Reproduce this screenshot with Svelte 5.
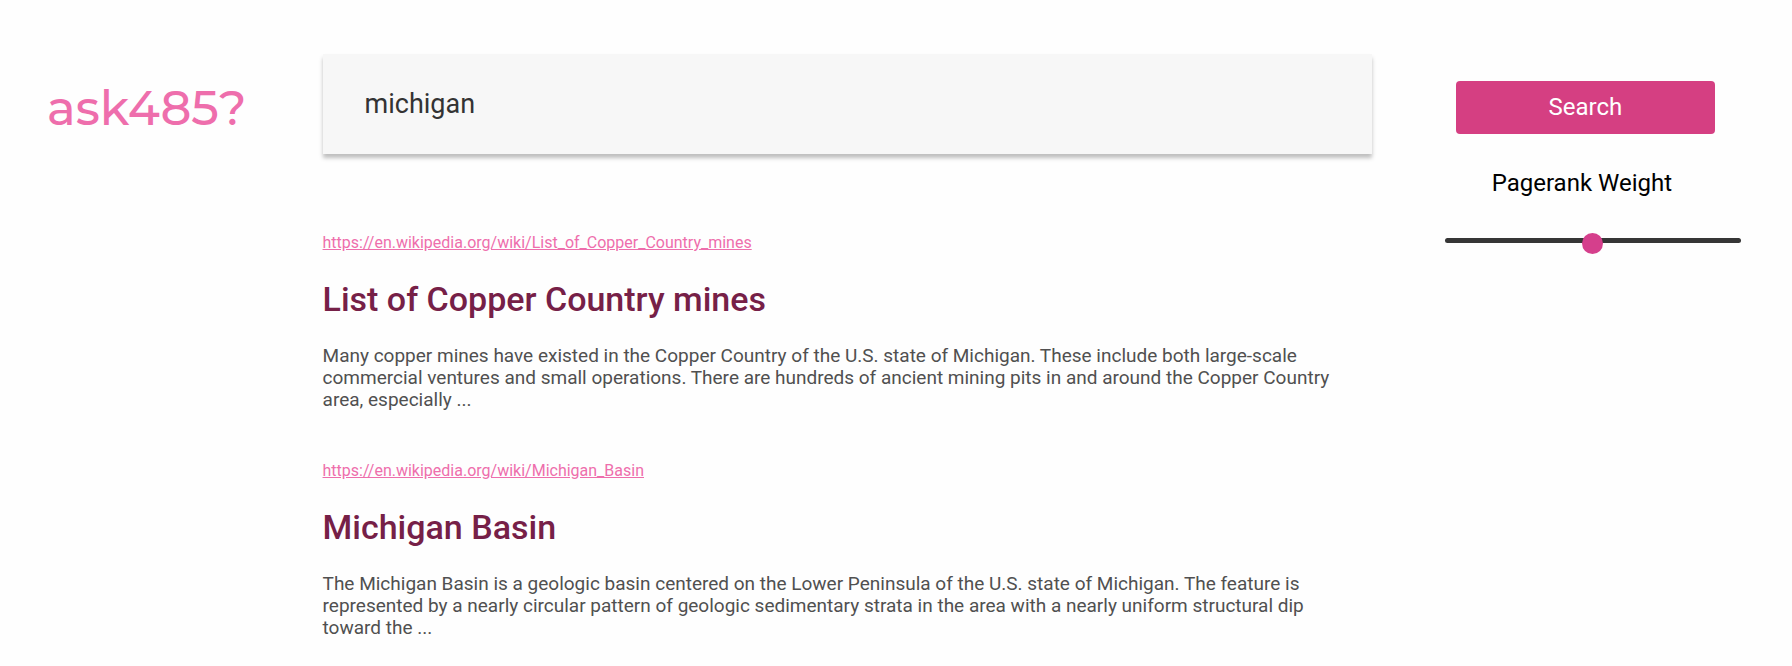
<script>
  let query = $state('michigan');
  let weight = $state(0.5);

  const results = [
    {
      url: 'https://en.wikipedia.org/wiki/List_of_Copper_Country_mines',
      title: 'List of Copper Country mines',
      summary:
        'Many copper mines have existed in the Copper Country of the U.S. state of Michigan. These include both large-scale commercial ventures and small operations. There are hundreds of ancient mining pits in and around the Copper Country area, especially ...'
    },
    {
      url: 'https://en.wikipedia.org/wiki/Michigan_Basin',
      title: 'Michigan Basin',
      summary:
        'The Michigan Basin is a geologic basin centered on the Lower Peninsula of the U.S. state of Michigan. The feature is represented by a nearly circular pattern of geologic sedimentary strata in the area with a nearly uniform structural dip toward the ...'
    }
  ];
</script>

<form class="page" onsubmit={(e) => e.preventDefault()}>
  <header class="brand"><span class="logo">ask485?</span></header>

  <main class="content">
    <input class="query" type="text" aria-label="Search query" bind:value={query} />
    <div class="results">
      {#each results as result}
        <article class="result">
          <a class="url" href={result.url}>{result.url}</a>
          <h2 class="title">{result.title}</h2>
          <p class="summary">{result.summary}</p>
        </article>
      {/each}
    </div>
  </main>

  <aside class="controls">
    <button class="search" type="submit">Search</button>
    <label class="label" for="weight">Pagerank Weight</label>
    <input class="slider" id="weight" type="range" min="0" max="1" step="0.01" bind:value={weight} />
  </aside>
</form>

<style>
  :global(body) {
    background: #fefefe;
  }

  .page {
    display: grid;
    grid-template-columns: 360fr 1171fr 469fr;
    align-items: start;
    font-family: Roboto, sans-serif;
  }

  .brand {
    padding: 78px 0 0 47px;
  }

  .logo {
    display: block;
    font-family: Montserrat, Inter, sans-serif;
    font-size: 48px;
    font-weight: 500;
    line-height: 60px;
    color: #ee6eac;
  }

  .content {
    min-width: 0;
    padding-top: 54px;
  }

  .query {
    box-sizing: border-box;
    display: block;
    width: 100%;
    height: 100px;
    padding: 0 42px;
    border: 0;
    outline: 0;
    background: #f7f7f7;
    box-shadow: 0 4px 4px rgba(0, 0, 0, 0.25);
    color: #333;
    font-family: inherit;
    font-size: 27px;
  }

  .results {
    display: flex;
    flex-direction: column;
    gap: 50px;
    padding: 79px 24px 0 0;
  }

  .result {
    display: flex;
    flex-direction: column;
    align-items: flex-start;
    gap: 26px;
  }

  .url {
    color: #ee6eac;
    font-size: 16px;
    line-height: 20px;
  }

  .title {
    margin: 0;
    color: #762047;
    font-size: 34px;
    font-weight: 500;
    line-height: 40px;
  }

  .summary {
    margin: 0;
    color: #505050;
    font-size: 19px;
    line-height: 22px;
  }

  .controls {
    display: flex;
    flex-direction: column;
    padding: 81px 51px 0 73px;
  }

  .search {
    height: 53px;
    margin: 0 26px 0 11px;
    padding: 0 0 2px;
    border: 0;
    border-radius: 4px;
    background: #d53f82;
    color: #fff;
    font-family: inherit;
    font-size: 24px;
  }

  .label {
    margin-top: 34px;
    padding-right: 22px;
    color: #000;
    font-size: 24px;
    line-height: 30px;
    text-align: center;
  }

  .slider {
    appearance: none;
    width: 100%;
    height: 5px;
    margin: 40px 0 0;
    border-radius: 3px;
    background: #363636;
  }

  .slider::-webkit-slider-thumb {
    appearance: none;
    width: 21px;
    height: 21px;
    margin-top: 5px;
    border-radius: 50%;
    background: #d53f8c;
  }
</style>
